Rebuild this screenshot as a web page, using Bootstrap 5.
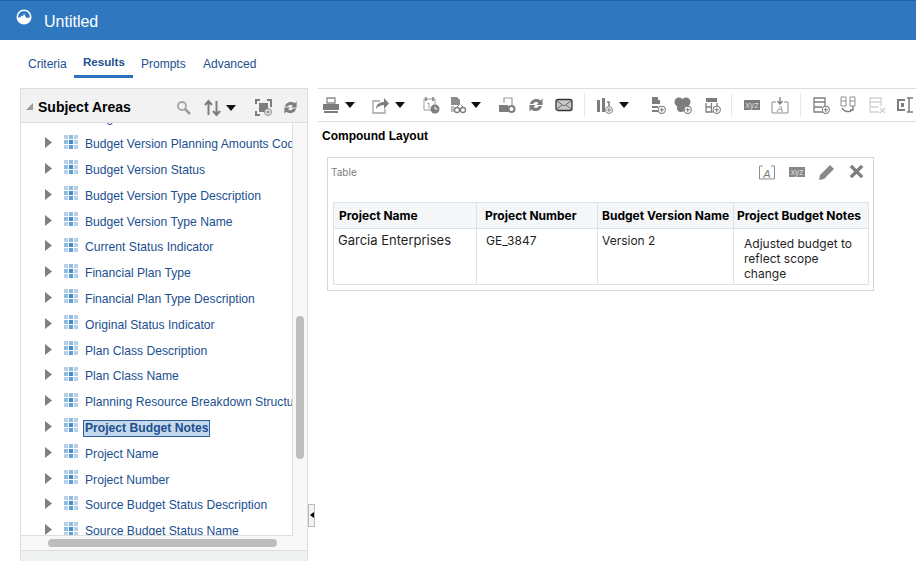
<!DOCTYPE html>
<html lang="en"><head><meta charset="utf-8"><title>Untitled</title>
<link href="https://cdn.jsdelivr.net/npm/bootstrap@5.3.0/dist/css/bootstrap.min.css" rel="stylesheet">
<style>
html,body{height:562px;overflow:hidden;background:#fff}
body{font-family:"Liberation Sans",Arial,sans-serif;color:#000;width:916px}
.app-bar{height:40px;background:#2f78bf;border-top:1px solid #1f64ab;color:#fff;padding-left:16px;font-size:16px;padding-top:3px}
.app-bar svg{width:16px;height:16px;margin-right:12px;margin-top:-10px}
.tab-row{height:38px;padding-left:20px;align-items:flex-end}
.tab-item{display:block;padding:3px 0 0 8px;color:#1b4f8f;font-size:12px;line-height:16px;text-decoration:none;height:25px;border-bottom:3px solid transparent}
.tw1{width:54px}.tw2{width:59px}.tw3{width:62px}
.tab-item.on{font-weight:700;font-size:11.6px;border-bottom-color:#2a72bb;padding-top:1px;padding-left:9px}
.work{height:484px;padding-left:20px;margin-top:10px}
.side{width:288px;border:1px solid #dcdfe0;border-bottom:0;height:473px;flex:none}
.side-head{height:34px;background:#f2f2f2;border-bottom:1px solid #dcdfe0;padding:2px 0 0 5px}
.side-head>svg{margin-top:2px}
.side-head>svg.st{margin-top:0}
.side-title{font-weight:700;font-size:14px;margin-left:5px;line-height:32px;width:138px}
.sg5{margin-left:5px}.sg12{margin-left:12px}.sg19{margin-left:19px}.sg10{margin-left:10px}
.tree-wrap{height:412px}
.tree{width:272px;border-right:1px solid #dcdfe0;border-bottom:1px solid #dcdfe0;overflow:hidden;height:413px}
.tree-in{margin-top:-17.5px}
.tree-row{height:25.8px;padding-left:24px;font-size:12.15px;color:#1b4f8f;white-space:nowrap}
.tree-row .tri{width:7px;height:11px;flex:none;margin-top:-3px}
.tree-row .cube{width:14px;height:14px;flex:none;margin-left:12px;margin-top:-5px;margin-right:6px}
.lbl{line-height:16px;padding:0 1px}
.tree-row.sel .lbl{background:#c5d9ec;border:1px solid #2f5f9c;font-weight:700;margin-left:-1px;padding:0 1px;line-height:15px;margin-top:1px}
.vbar{width:14px;background:#f8f8f8}
.vthumb{width:8px;height:143px;background:#bdbdbd;border-radius:4px;margin:193px 0 0 3px}
.hbar{height:15px;background:#f8f8f8;padding-top:4px}
.hthumb{width:229px;height:8px;background:#bdbdbd;border-radius:4px;margin-left:27px}
.side-foot{height:11px;background:#f0f1f1;border-top:1px solid #dcdfe0}
.split{width:7px;height:23px;background:#f3f3f3;border:1px solid #bbb;margin-top:416px;flex:none}
.split i{display:block;border:3px solid transparent;border-right:4px solid #000;border-left:0;margin:7px 0 0 1px;width:0}
.main{width:598px;margin-left:3px;flex:none}
.tools{height:34px;border-top:1px solid #d6dfe7;border-bottom:1px solid #d6dfe7;padding-left:4px}
.tools>*{flex:none;margin-left:10px}
.tools>svg{width:18px;height:18px}
.tools>.cr{width:0;height:0;border:5px solid transparent;border-top:6px solid #111;border-bottom:0}
.tools>.sp{width:1px;height:24px;background:#e2e8ee}
.tools>.g0{margin-left:0}.tools>.g4{margin-left:4px}.tools>.g5{margin-left:5px}.tools>.g6{margin-left:6px}.tools>.g8{margin-left:8px}.tools>.g9{margin-left:9px}.tools>.g11{margin-left:11px}.tools>.g16{margin-left:16px}.tools>.g17{margin-left:17px}.tools>.g19{margin-left:19px}
.comp-title{font-weight:700;font-size:12px;line-height:16px;margin:6px 0 0 4px}
.view{width:547px;height:134px;border:1px solid #d5d5d5;margin:13px 0 0 9px;padding:0 5px}
.view-top{height:44px}
.view-name{font-family:Inter,"Liberation Sans",sans-serif;font-size:10px;color:#7c7c7c;margin:7px 0 0 -2px;line-height:14px}
.vi-a{flex:none;margin-top:7px}
.vi-x{flex:none;margin:9px 0 0 14px}
.vi-p{flex:none;margin:5px 0 0 13px}
.vi-c{flex:none;margin:6px 4px 0 13px}
.rt{table-layout:fixed;width:535px;margin:0;font-family:Inter,"Liberation Sans",sans-serif;border-collapse:collapse}
.cw1{width:143px}.cw2{width:121px}.cw3{width:136px}.cw4{width:135px}
.rt thead tr th,.rt tbody tr td{border:1px solid #d9e3ea;padding:0;vertical-align:top;color:#1f1f1f;box-shadow:none}
.rt thead tr th{height:26px;background:#f4f6f8;font-size:12px;font-weight:700;line-height:25px;color:#000;white-space:nowrap;overflow:hidden}
.rt tbody tr td{height:56px;font-size:12px;line-height:15px}
.rt tbody tr td.d-big{font-size:13px;padding:4px 0 0 4px}
.rt tbody tr td.d-a{padding:4px 0 0 9px}.rt tbody tr td.d-b{padding:4px 0 0 4px}.rt tbody tr td.d-c{padding:7px 6px 0 10px}
.rt thead tr th.c1{padding-left:5px}.rt thead tr th.c2{padding-left:8px}.rt thead tr th.h5pad{padding-left:4px}.rt thead tr th.h4pad{padding-left:3px}
</style></head><body>
<svg width="0" height="0" class="position-absolute">
<defs>
<symbol id="cube" viewBox="0 0 14 14">
<rect x="0" y="0" width="4" height="4" fill="#b5d0e8"/><rect x="5" y="0" width="4" height="4" fill="#8fbbdf"/><rect x="10" y="0" width="4" height="4" fill="#b5d0e8"/>
<rect x="0" y="5" width="4" height="4" fill="#8fbbdf"/><rect x="5" y="5" width="4" height="4" fill="#3e8cca"/><rect x="10" y="5" width="4" height="4" fill="#b5d0e8"/>
<rect x="0" y="10" width="4" height="4" fill="#b5d0e8"/><rect x="5" y="10" width="4" height="4" fill="#5ba0d5"/><rect x="10" y="10" width="4" height="4" fill="#b5d0e8"/>
</symbol>
<symbol id="tri" viewBox="0 0 7 11"><path d="M0 0L7 5.500L0 11Z" fill="#808080"/></symbol>
<symbol id="ref" viewBox="0 0 18 18"><path d="M3 8a6.500 6.500 0 0 1 10.500-3.500L15.500 2.500V9h-6l2-2a4 4 0 0 0-5.500 1zM15 10a6.500 6.500 0 0 1-10.500 3.500L2.500 15.500V9h6l-2 2a4 4 0 0 0 5.500-1z" fill="#7d7d7d"/></symbol>
<symbol id="plus" viewBox="0 0 8 8"><circle cx="4" cy="4" r="3.400" fill="#fff" stroke="#7d7d7d"/><path d="M4 2v4M2 4h4" stroke="#7d7d7d"/></symbol>
</defs></svg>

<header class="app-bar d-flex align-items-center">
<svg viewBox="0 0 16 16"><circle cx="8" cy="8" r="7.500" fill="#fff"/><path d="M2 8a6 6 0 0 1 12 0c-1.500 1-3 1-4 .5L8 4.500 7 7.500 5 6.500 4.500 8.500C3.500 8.800 2.700 8.500 2 8z" fill="#2f78bf"/></svg>
<span>Untitled</span>
</header>

<nav class="nav tab-row d-flex">
<a class="tab-item tw1" href="#">Criteria</a>
<a class="tab-item tw2 on" href="#">Results</a>
<a class="tab-item tw3" href="#">Prompts</a>
<a class="tab-item" href="#">Advanced</a>
</nav>

<div class="d-flex work">
<aside class="side">
<div class="side-head d-flex align-items-center">
<svg width="7" height="7" viewBox="0 0 7 7" class="st"><path d="M7 0V7H0Z" fill="#9a9a9a"/></svg>
<span class="side-title">Subject Areas</span>
<svg width="16" height="16" viewBox="0 0 16 16"><circle cx="6" cy="6" r="4" fill="none" stroke="#a5a5a5" stroke-width="1.800"/><path d="M9 9l5 5" stroke="#9a9a9a" stroke-width="2.500"/></svg>
<svg width="17" height="18" viewBox="0 0 17 18" class="sg12"><path d="M4.500 16V3M1 6l3.500-4L8 6M12.500 2v13M9 12l3.500 4 3.500-4" fill="none" stroke="#7d7d7d" stroke-width="2"/></svg>
<svg width="10" height="6" viewBox="0 0 10 6" class="sg5"><path d="M0 0H10L5 6Z" fill="#111"/></svg>
<svg width="17" height="17" viewBox="0 0 17 17" class="sg19"><path d="M5 1H1v4M12 1h4v7M1 12v4h4" fill="none" stroke="#7d7d7d" stroke-width="2"/><rect x="4" y="4" width="9" height="9" fill="#7d7d7d"/><svg x="9" y="9" width="8" height="8"><use href="#plus"/></svg></svg>
<svg width="17" height="17" viewBox="0 0 18 18" class="sg10"><use href="#ref"/></svg>
</div>
<div class="d-flex tree-wrap">
<div class="tree"><div class="tree-in">
<div class="tree-row d-flex align-items-center"><svg class="tri"><use href="#tri"/></svg><svg class="cube"><use href="#cube"/></svg><span class="lbl">Budget Version Name</span></div>
<div class="tree-row d-flex align-items-center"><svg class="tri"><use href="#tri"/></svg><svg class="cube"><use href="#cube"/></svg><span class="lbl">Budget Version Planning Amounts Code</span></div>
<div class="tree-row d-flex align-items-center"><svg class="tri"><use href="#tri"/></svg><svg class="cube"><use href="#cube"/></svg><span class="lbl">Budget Version Status</span></div>
<div class="tree-row d-flex align-items-center"><svg class="tri"><use href="#tri"/></svg><svg class="cube"><use href="#cube"/></svg><span class="lbl">Budget Version Type Description</span></div>
<div class="tree-row d-flex align-items-center"><svg class="tri"><use href="#tri"/></svg><svg class="cube"><use href="#cube"/></svg><span class="lbl">Budget Version Type Name</span></div>
<div class="tree-row d-flex align-items-center"><svg class="tri"><use href="#tri"/></svg><svg class="cube"><use href="#cube"/></svg><span class="lbl">Current Status Indicator</span></div>
<div class="tree-row d-flex align-items-center"><svg class="tri"><use href="#tri"/></svg><svg class="cube"><use href="#cube"/></svg><span class="lbl">Financial Plan Type</span></div>
<div class="tree-row d-flex align-items-center"><svg class="tri"><use href="#tri"/></svg><svg class="cube"><use href="#cube"/></svg><span class="lbl">Financial Plan Type Description</span></div>
<div class="tree-row d-flex align-items-center"><svg class="tri"><use href="#tri"/></svg><svg class="cube"><use href="#cube"/></svg><span class="lbl">Original Status Indicator</span></div>
<div class="tree-row d-flex align-items-center"><svg class="tri"><use href="#tri"/></svg><svg class="cube"><use href="#cube"/></svg><span class="lbl">Plan Class Description</span></div>
<div class="tree-row d-flex align-items-center"><svg class="tri"><use href="#tri"/></svg><svg class="cube"><use href="#cube"/></svg><span class="lbl">Plan Class Name</span></div>
<div class="tree-row d-flex align-items-center"><svg class="tri"><use href="#tri"/></svg><svg class="cube"><use href="#cube"/></svg><span class="lbl">Planning Resource Breakdown Structure</span></div>
<div class="tree-row sel d-flex align-items-center"><svg class="tri"><use href="#tri"/></svg><svg class="cube"><use href="#cube"/></svg><span class="lbl">Project Budget Notes</span></div>
<div class="tree-row d-flex align-items-center"><svg class="tri"><use href="#tri"/></svg><svg class="cube"><use href="#cube"/></svg><span class="lbl">Project Name</span></div>
<div class="tree-row d-flex align-items-center"><svg class="tri"><use href="#tri"/></svg><svg class="cube"><use href="#cube"/></svg><span class="lbl">Project Number</span></div>
<div class="tree-row d-flex align-items-center"><svg class="tri"><use href="#tri"/></svg><svg class="cube"><use href="#cube"/></svg><span class="lbl">Source Budget Status Description</span></div>
<div class="tree-row d-flex align-items-center"><svg class="tri"><use href="#tri"/></svg><svg class="cube"><use href="#cube"/></svg><span class="lbl">Source Budget Status Name</span></div>
</div></div>
<div class="vbar"><div class="vthumb"></div></div>
</div>
<div class="hbar"><div class="hthumb"></div></div>
<div class="side-foot"></div>
</aside>
<div class="split"><i></i></div>
<main class="main">
<div class="tools d-flex align-items-center">
<svg class="g0" viewBox="0 0 18 18"><path d="M5 2h8v5H5z" fill="none" stroke="#8a8a8a" stroke-width="1.300"/><path d="M1 8h16v6H1z" fill="#7d7d7d"/><path d="M2 15h14v2H2z" fill="#7d7d7d"/></svg>
<span class="cr g5"></span>
<svg class="g16" viewBox="0 0 18 18"><path d="M9 5H2v12h12v-4" fill="none" stroke="#a3a3a3" stroke-width="1.300"/><path d="M5 13c0-5 4-7 8-7V2l5 5.500L13 13V9c-3 0-6 1-8 4z" fill="#7d7d7d"/></svg>
<span class="cr g6"></span>
<svg class="g17" viewBox="0 0 18 18"><path d="M2 3h11v11H2z" fill="none" stroke="#9a9a9a"/><path d="M4 1v4M11 1v4" stroke="#7d7d7d" stroke-width="1.500"/><path d="M5.500 7.500h1.500v5" fill="none" stroke="#9a9a9a"/><circle cx="13" cy="13" r="4.500" fill="#7d7d7d"/><path d="M13 10.500V13h2.500" fill="none" stroke="#fff"/></svg>
<svg class="g9" viewBox="0 0 18 18"><path d="M2 1h6l3 3v5H2z" fill="#8a8a8a"/><path d="M2 10h3v6H2z" fill="#bbb"/><circle cx="8" cy="14" r="2.500" fill="none" stroke="#7d7d7d" stroke-width="1.300"/><circle cx="14" cy="14" r="2.500" fill="none" stroke="#7d7d7d" stroke-width="1.300"/><path d="M10 13h2M8 11l2-2M14 11l-2-2" stroke="#7d7d7d"/></svg>
<span class="cr g4"></span>
<svg class="g17" viewBox="0 0 18 18"><path d="M6 7V2h8v7" fill="none" stroke="#9a9a9a" stroke-width="1.200"/><path d="M1 9h9v7H1z" fill="#7d7d7d"/><circle cx="13.500" cy="13" r="3" fill="none" stroke="#7d7d7d" stroke-width="2"/></svg>
<svg class="g11" viewBox="0 0 18 18"><use href="#ref"/></svg>
<svg viewBox="0 0 18 18"><rect x="1" y="3.500" width="16" height="11" rx="2" fill="#c9c9c9" stroke="#333" stroke-width="1.300"/><path d="M2 5l7 5 7-5M2 13l5-4M16 13l-5-4" fill="none" stroke="#666"/></svg>
<span class="sp g11"></span>
<svg viewBox="0 0 18 18"><path d="M2 4h3v12H2zM7 2h3v14H7z" fill="#7d7d7d"/><path d="M12 6h2v4" fill="none" stroke="#7d7d7d" stroke-width="1.500"/><svg x="10" y="10" width="8" height="8"><use href="#plus"/></svg></svg>
<span class="cr g6"></span>
<svg class="g19" viewBox="0 0 18 18"><path d="M4 1h6v3h2v4H4zM4 10h6v2H4zM4 14h6v2H4z" fill="#7d7d7d"/><svg x="9.500" y="9.500" width="8.500" height="8.500"><use href="#plus"/></svg></svg>
<svg class="g8" viewBox="0 0 18 18"><circle cx="5" cy="6" r="4.500" fill="#7d7d7d"/><circle cx="12" cy="6" r="4.500" fill="#7d7d7d"/><circle cx="7" cy="12" r="4" fill="#7d7d7d"/><svg x="9.500" y="9.500" width="8.500" height="8.500"><use href="#plus"/></svg></svg>
<svg class="g11" viewBox="0 0 18 18"><path d="M3 2h11v4H3z" fill="#7d7d7d"/><path d="M3 7v9h7M14 7v3M8.500 7v9M3 11h6" fill="none" stroke="#7d7d7d" stroke-width="1.300"/><svg x="9.500" y="9.500" width="8.500" height="8.500"><use href="#plus"/></svg></svg>
<span class="sp"></span>
<svg class="g11" viewBox="0 0 18 18"><rect x="1" y="4" width="16" height="10" fill="#7d7d7d"/><text x="9" y="12" font-size="9" font-family="Liberation Sans" text-anchor="middle" fill="#ddd">xyz</text></svg>
<svg viewBox="0 0 18 18"><path d="M5 6H1v11h16V6h-4" fill="none" stroke="#8f8f8f"/><path d="M9 1v6M6.500 5L9 8l2.500-3" fill="none" stroke="#7d7d7d" stroke-width="1.300"/><text x="9" y="16" font-size="9" font-style="italic" font-family="Liberation Sans" text-anchor="middle" fill="#7d7d7d">A</text></svg>
<span class="sp g11"></span>
<svg class="g11" viewBox="0 0 18 18"><path d="M11 16H2V2h11v8M2 6h11M2 11h8" fill="none" stroke="#7d7d7d" stroke-width="1.300"/><svg x="9.500" y="9.500" width="8.500" height="8.500"><use href="#plus"/></svg></svg>
<svg class="g9" viewBox="0 0 18 18"><path d="M2 1h5v9H2zM11 1h5v9h-5zM2 5h5M11 5h5" fill="none" stroke="#8f8f8f"/><path d="M3 12c2 4 8 5 11 1M14 10v4h-3" fill="none" stroke="#7d7d7d" stroke-width="1.300"/></svg>
<svg class="g11" viewBox="0 0 18 18"><path d="M11 16H2V2h11v8M2 6h11M2 11h8" fill="none" stroke="#d2d2d2" stroke-width="1.300"/><path d="M12 12l5 5M17 12l-5 5" stroke="#d2d2d2" stroke-width="1.500"/></svg>
<svg viewBox="0 0 18 18"><path d="M9 4H2v10h7" fill="none" stroke="#7d7d7d" stroke-width="2"/><path d="M13 2v14M11 2h6M11 16h6" fill="none" stroke="#7d7d7d" stroke-width="1.500"/><rect x="5" y="7" width="3" height="4" fill="#7d7d7d"/></svg>
</div>
<div class="comp-title">Compound Layout</div>
<section class="view">
<div class="view-top d-flex align-items-start">
<span class="view-name flex-grow-1">Table</span>
<svg width="16" height="15" viewBox="0 0 16 15" class="vi-a"><path d="M4 1H.5v13h15V1H12" fill="none" stroke="#8f8f8f"/><text x="8" y="12.500" font-size="11" font-style="italic" font-family="Liberation Sans" text-anchor="middle" fill="#7d7d7d">A</text></svg>
<svg width="16" height="10" viewBox="0 0 16 10" class="vi-x"><rect width="16" height="10" fill="#888"/><text x="8" y="8" font-size="8.500" font-family="Liberation Sans" text-anchor="middle" fill="#ddd">xyz</text></svg>
<svg width="18" height="18" viewBox="0 0 18 18" class="vi-p"><path d="M2 12L12 2l4 4L6 16l-5 1z" fill="#8a8a8a"/></svg>
<svg width="15" height="15" viewBox="0 0 16 16" class="vi-c"><path d="M2 2l12 12M14 2L2 14" stroke="#7f7f7f" stroke-width="3.600"/></svg>
</div>
<table class="table rt">
<colgroup><col class="cw1"><col class="cw2"><col class="cw3"><col class="cw4"></colgroup>
<thead><tr><th class="c1">Project Name</th><th class="c2">Project Number</th><th class="h5pad">Budget Version Name</th><th class="h4pad">Project Budget Notes</th></tr></thead>
<tbody><tr><td class="d-big">Garcia Enterprises</td><td class="d-a">GE_3847</td><td class="d-b">Version 2</td><td class="d-c">Adjusted budget to reflect scope change</td></tr></tbody>
</table>
</section>
</main>
</div>
</body></html>
